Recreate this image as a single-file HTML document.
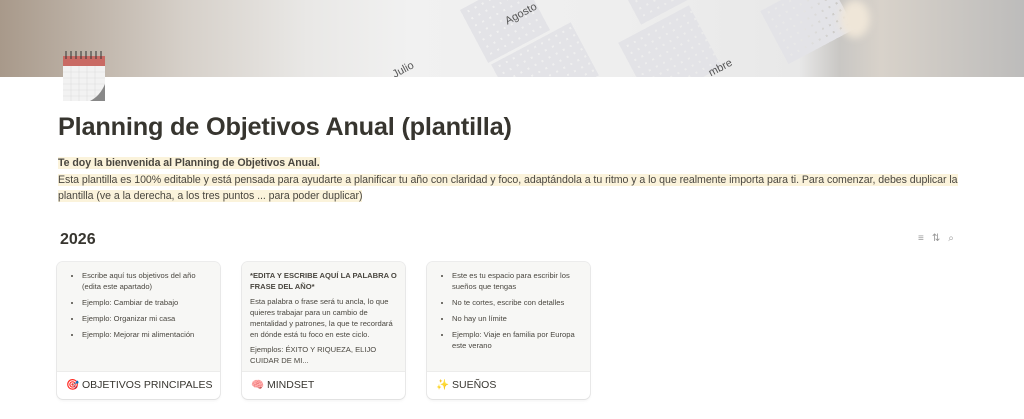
<!DOCTYPE html>
<html><head><meta charset="utf-8"><style>
*{margin:0;padding:0;box-sizing:border-box}
body{width:1024px;height:419px;overflow:hidden;background:#fff;font-family:"Liberation Sans",sans-serif;color:#37352f;position:relative}
.cover{position:absolute;left:0;top:0;width:1024px;height:77px;background:linear-gradient(90deg,#a8998a 0%,#d6d0c9 18%,#e9e8e6 30%,#f1f1f1 40%,#eeeeee 60%,#e8e8e8 78%,#c9c7c4 82%,#d8d2ca 86%,#bdbcbb 100%);overflow:hidden}
.grid{position:absolute;background:repeating-linear-gradient(90deg,#e3e3e7 0 6px,transparent 6px 8px),repeating-linear-gradient(0deg,#e3e3e7 0 6px,transparent 6px 8px);transform:rotate(-28deg)}
.cal{position:absolute;left:62px;top:50px;width:44px;height:51px}
h1{position:absolute;left:58px;top:113px;font-size:25.3px;font-weight:700;color:#37352f;letter-spacing:-.2px}
.intro{position:absolute;left:58px;top:155px;width:910px;font-size:10.6px;line-height:16.5px;color:#4a4740;letter-spacing:-.05px}
.intro span{background:#fbf3db}
.h2{position:absolute;left:60px;top:231px;font-size:16px;font-weight:700}
.icons{position:absolute;left:918px;top:233px;font-size:10px;color:#999;letter-spacing:8px}
.card{position:absolute;top:262px;width:163px;height:137px;border-radius:6px;box-shadow:0 0 0 1px rgba(15,15,15,.08),0 2px 3px rgba(15,15,15,.05);overflow:hidden;background:#fff}
.card .body{height:110px;background:#f7f7f5;padding:8px 8px 0 12px;font-size:7.6px;line-height:11px;color:#4a4740;overflow:hidden;border-bottom:1px solid #ececeb}
.card ul{padding-left:13px}
.card li{margin-bottom:5px}
.card p{margin-bottom:4px}
.card .foot{height:27px;padding:6px 0 0 9px;font-size:10.5px;color:#37352f}
</style></head><body>
<div class="cover">
 <div class="grid" style="left:470px;top:-10px;width:70px;height:60px"></div>
 <div class="grid" style="left:500px;top:40px;width:90px;height:60px"></div>
 <div class="grid" style="left:630px;top:20px;width:80px;height:70px"></div>
 <div class="grid" style="left:630px;top:-20px;width:70px;height:30px"></div>
 <div class="grid" style="left:770px;top:-10px;width:75px;height:60px"></div>
 <div style="position:absolute;left:504px;top:8px;font-size:11px;color:#555;transform:rotate(-28deg)">Agosto</div>
 <div style="position:absolute;left:392px;top:64px;font-size:11px;color:#555;transform:rotate(-28deg)">Julio</div>
 <div style="position:absolute;left:708px;top:62px;font-size:11px;color:#555;transform:rotate(-28deg)">mbre</div>
 <div style="position:absolute;left:840px;top:0;width:30px;height:38px;border-radius:50%;background:#efe6d8;filter:blur(4px)"></div>
</div>
<svg class="cal" viewBox="0 0 44 51">
 <rect x="1" y="6" width="42" height="45" fill="#f2f2f2"/>
 <rect x="1" y="6" width="42" height="10" fill="#c96a64"/>
 <g stroke="#ddd" stroke-width=".6">
 <path d="M1 22H43M1 28H43M1 34H43M1 40H43M1 46H43M9 16V51M17 16V51M25 16V51M33 16V51"/></g>
 <g stroke="#333" stroke-width="1"><path d="M4 1V9M9 1V9M14 1V9M19 1V9M24 1V9M29 1V9M34 1V9M39 1V9"/></g>
 <path d="M43 34 Q38 46 28 51 L43 51Z" fill="#888"/>
</svg>
<h1>Planning de Objetivos Anual (plantilla)</h1>
<div class="intro"><span style="font-weight:700">Te doy la bienvenida al Planning de Objetivos Anual.</span><br><span>Esta plantilla es 100% editable y está pensada para ayudarte a planificar tu año con claridad y foco, adaptándola a tu ritmo y a lo que realmente importa para ti. Para comenzar, debes duplicar la plantilla (ve a la derecha, a los tres puntos ... para poder duplicar)</span></div>
<div class="h2">2026</div>
<div class="icons">≡⇅⌕</div>
<div class="card" style="left:57px"><div class="body"><ul><li>Escribe aquí tus objetivos del año (edita este apartado)</li><li>Ejemplo: Cambiar de trabajo</li><li>Ejemplo: Organizar mi casa</li><li>Ejemplo: Mejorar mi alimentación</li></ul></div><div class="foot">🎯 OBJETIVOS PRINCIPALES</div></div>
<div class="card" style="left:242px"><div class="body" style="padding-left:8px"><p style="font-weight:700">*EDITA Y ESCRIBE AQUÍ LA PALABRA O FRASE DEL AÑO*</p><p>Esta palabra o frase será tu ancla, lo que quieres trabajar para un cambio de mentalidad y patrones, la que te recordará en dónde está tu foco en este ciclo.</p><p>Ejemplos: ÉXITO Y RIQUEZA, ELIJO CUIDAR DE MI...</p></div><div class="foot">🧠 MINDSET</div></div>
<div class="card" style="left:427px"><div class="body"><ul><li>Este es tu espacio para escribir los sueños que tengas</li><li>No te cortes, escribe con detalles</li><li>No hay un límite</li><li>Ejemplo: Viaje en familia por Europa este verano</li></ul></div><div class="foot">✨ SUEÑOS</div></div>
</body></html>
